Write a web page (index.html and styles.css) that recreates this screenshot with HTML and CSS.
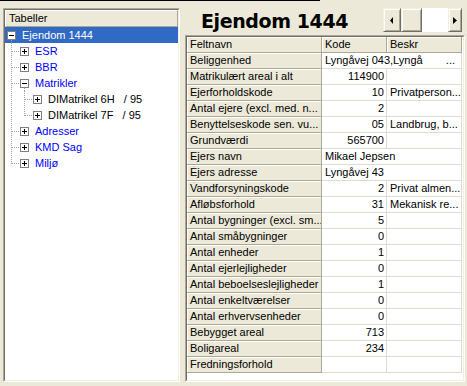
FILE: index.html
```html
<!DOCTYPE html>
<html lang="da">
<head>
  <meta charset="UTF-8" />
  <meta name="viewport" content="width=device-width, initial-scale=1.0">
  <title>Ejendom 1444</title>
  <link rel="stylesheet" href="styles.css">
</head>
<body>
  <div class="window">
    <div class="topline"></div>
    <div class="main">

      <div class="tree-panel">
        <div class="tree-inner">
          <div class="tree-header">Tabeller</div>

          <div class="trow selected">
            <span class="tw node down"><svg width="9" height="9"><rect x="0.5" y="0.5" width="8" height="8" fill="#fff" stroke="#808080"/><path d="M2 4.5h5" stroke="#000"/></svg></span>
            <span class="label root">Ejendom 1444</span>
          </div>
          <div class="trow">
            <span class="tw tee"></span>
            <span class="tw node stub"><svg width="9" height="9"><rect x="0.5" y="0.5" width="8" height="8" fill="#fff" stroke="#808080"/><path d="M2 4.5h5M4.5 2v5" stroke="#000"/></svg></span>
            <span class="label blue">ESR</span>
          </div>
          <div class="trow">
            <span class="tw tee"></span>
            <span class="tw node stub"><svg width="9" height="9"><rect x="0.5" y="0.5" width="8" height="8" fill="#fff" stroke="#808080"/><path d="M2 4.5h5M4.5 2v5" stroke="#000"/></svg></span>
            <span class="label blue">BBR</span>
          </div>
          <div class="trow">
            <span class="tw tee"></span>
            <span class="tw node stub down"><svg width="9" height="9"><rect x="0.5" y="0.5" width="8" height="8" fill="#fff" stroke="#808080"/><path d="M2 4.5h5" stroke="#000"/></svg></span>
            <span class="label blue">Matrikler</span>
          </div>
          <div class="trow">
            <span class="tw pipe"></span>
            <span class="tw tee"></span>
            <span class="tw node stub"><svg width="9" height="9"><rect x="0.5" y="0.5" width="8" height="8" fill="#fff" stroke="#808080"/><path d="M2 4.5h5M4.5 2v5" stroke="#000"/></svg></span>
            <span class="label">DIMatrikel 6H   / 95</span>
          </div>
          <div class="trow">
            <span class="tw pipe"></span>
            <span class="tw ell"></span>
            <span class="tw node stub"><svg width="9" height="9"><rect x="0.5" y="0.5" width="8" height="8" fill="#fff" stroke="#808080"/><path d="M2 4.5h5M4.5 2v5" stroke="#000"/></svg></span>
            <span class="label">DIMatrikel 7F   / 95</span>
          </div>
          <div class="trow">
            <span class="tw tee"></span>
            <span class="tw node stub"><svg width="9" height="9"><rect x="0.5" y="0.5" width="8" height="8" fill="#fff" stroke="#808080"/><path d="M2 4.5h5M4.5 2v5" stroke="#000"/></svg></span>
            <span class="label blue">Adresser</span>
          </div>
          <div class="trow">
            <span class="tw tee"></span>
            <span class="tw node stub"><svg width="9" height="9"><rect x="0.5" y="0.5" width="8" height="8" fill="#fff" stroke="#808080"/><path d="M2 4.5h5M4.5 2v5" stroke="#000"/></svg></span>
            <span class="label blue">KMD Sag</span>
          </div>
          <div class="trow">
            <span class="tw ell"></span>
            <span class="tw node stub"><svg width="9" height="9"><rect x="0.5" y="0.5" width="8" height="8" fill="#fff" stroke="#808080"/><path d="M2 4.5h5M4.5 2v5" stroke="#000"/></svg></span>
            <span class="label blue">Miljø</span>
          </div>
        </div>
      </div>

      <div class="right">
        <div class="titlebar">
          <h1>Ejendom 1444</h1>
          <div class="hscroll">
            <div class="sbtn left"><svg width="4" height="7"><path d="M3 0v7L0 3.5z" fill="#000"/></svg></div>
            <div class="thumb"></div>
            <div class="track"></div>
            <div class="sbtn right"><svg width="4" height="7"><path d="M0 0v7l4-3.5z" fill="#000"/></svg></div>
          </div>
        </div>

        <div class="grid-outer">
          <div class="grid-inner">
            <div class="grid">
              <div class="fx">Feltnavn</div><div class="fx">Kode</div><div class="fx">Beskr</div>

              <div class="fx">Beliggenhed</div><div class="c span2 split"><span>Lyngåvej 043,Lyngå</span><span>...</span></div>
              <div class="fx">Matrikulært areal i alt</div><div class="c num">114900</div><div class="c"></div>
              <div class="fx">Ejerforholdskode</div><div class="c num">10</div><div class="c">Privatperson...</div>
              <div class="fx">Antal ejere (excl. med. n...</div><div class="c num">2</div><div class="c"></div>
              <div class="fx">Benyttelseskode sen. vu...</div><div class="c num">05</div><div class="c">Landbrug, b...</div>
              <div class="fx">Grundværdi</div><div class="c num">565700</div><div class="c"></div>
              <div class="fx">Ejers navn</div><div class="c span2">Mikael Jepsen</div>
              <div class="fx">Ejers adresse</div><div class="c span2">Lyngåvej 43</div>
              <div class="fx">Vandforsyningskode</div><div class="c num">2</div><div class="c">Privat almen...</div>
              <div class="fx">Afløbsforhold</div><div class="c num">31</div><div class="c">Mekanisk re...</div>
              <div class="fx">Antal bygninger (excl. sm...</div><div class="c num">5</div><div class="c"></div>
              <div class="fx">Antal småbygninger</div><div class="c num">0</div><div class="c"></div>
              <div class="fx">Antal enheder</div><div class="c num">1</div><div class="c"></div>
              <div class="fx">Antal ejerlejligheder</div><div class="c num">0</div><div class="c"></div>
              <div class="fx">Antal beboelseslejligheder</div><div class="c num">1</div><div class="c"></div>
              <div class="fx">Antal enkeltværelser</div><div class="c num">0</div><div class="c"></div>
              <div class="fx">Antal erhvervsenheder</div><div class="c num">0</div><div class="c"></div>
              <div class="fx">Bebygget areal</div><div class="c num">713</div><div class="c"></div>
              <div class="fx">Boligareal</div><div class="c num">234</div><div class="c"></div>
              <div class="fx">Fredningsforhold</div><div class="c"></div><div class="c"></div>
            </div>
          </div>
        </div>
      </div>

    </div>
  </div>
</body>
</html>
```

FILE: styles.css
```css
* {
  box-sizing: border-box;
}

body {
  margin: 0;
  background-color: #ece9d8;
  color: #000;
  font-family: "Liberation Sans", Arial, sans-serif;
  font-size: 11px;
}

.window {
  width: 467px;
  height: 386px;
  overflow: hidden;
}

.topline {
  width: 320px;
  height: 1px;
  background: #000;
}

.main {
  display: flex;
  gap: 5px;
  padding: 7px 2px 0 3px;
}

/* tree */

.tree-panel {
  width: 177px;
  height: 374px;
  border: 1px solid;
  border-color: #aca899 #fff #fff #aca899;
}

.tree-inner {
  height: 100%;
  background: #fff;
  border: 1px solid;
  border-color: #716f64 #f1efe2 #f1efe2 #716f64;
}

.tree-header {
  height: 17px;
  line-height: 15px;
  padding-left: 3px;
  background: #ece9d8;
  border: 1px solid;
  border-color: #fff #aca899 #aca899 #fff;
}

.trow {
  display: flex;
  height: 16px;
  line-height: 16px;
  white-space: pre;
}

.trow.selected {
  background: #316ac5;
  color: #fff;
}

.tw {
  flex: none;
  width: 13px;
  height: 16px;
  background-repeat: no-repeat;
}

.tw.pipe {
  background-image: repeating-linear-gradient(to bottom, #a0a0a0 0 1px, transparent 1px 2px);
  background-position: 6px 0;
  background-size: 1px 16px;
}

.tw.tee {
  background-image:
    repeating-linear-gradient(to bottom, #a0a0a0 0 1px, transparent 1px 2px),
    repeating-linear-gradient(to right, #a0a0a0 0 1px, transparent 1px 2px);
  background-position: 6px 0, 7px 8px;
  background-size: 1px 16px, 6px 1px;
}

.tw.ell {
  background-image:
    repeating-linear-gradient(to bottom, #a0a0a0 0 1px, transparent 1px 2px),
    repeating-linear-gradient(to right, #a0a0a0 0 1px, transparent 1px 2px);
  background-position: 6px 0, 7px 8px;
  background-size: 1px 9px, 6px 1px;
}

.tw.node svg {
  display: block;
  margin: 4px 0 0 2px;
}

.tw.node.stub {
  background-image: repeating-linear-gradient(to right, #a0a0a0 0 1px, transparent 1px 2px);
  background-position: 0 8px;
  background-size: 2px 1px;
}

.tw.node.down {
  background-image: repeating-linear-gradient(to bottom, #a0a0a0 0 1px, transparent 1px 2px);
  background-position: 6px 13px;
  background-size: 1px 3px;
}

.tw.node.stub.down {
  background-image:
    repeating-linear-gradient(to right, #a0a0a0 0 1px, transparent 1px 2px),
    repeating-linear-gradient(to bottom, #a0a0a0 0 1px, transparent 1px 2px);
  background-position: 0 8px, 6px 13px;
  background-size: 2px 1px, 1px 3px;
}

.label {
  padding-left: 4px;
}

.label.root {
  padding-left: 4px;
}

.blue {
  color: #0000ff;
}

/* right side */

.right {
  width: 280px;
  display: flex;
  flex-direction: column;
}

.titlebar {
  display: flex;
  height: 27px;
}

.titlebar h1 {
  margin: 0 0 0 16px;
  font-family: "DejaVu Sans", Verdana, sans-serif;
  font-size: 19px;
  font-weight: bold;
  line-height: 26px;
  letter-spacing: -0.4px;
}

.hscroll {
  display: flex;
  height: 24px;
  margin-left: auto;
  margin-right: 3px;
}

.sbtn, .thumb {
  display: flex;
  align-items: center;
  justify-content: center;
  background: #ece9d8;
  border: 1px solid;
  border-color: #f1efe2 #716f64 #716f64 #f1efe2;
  box-shadow: inset 1px 1px 0 #fff, inset -1px -1px 0 #aca899;
}

.sbtn.left {
  width: 18px;
}

.sbtn.right {
  width: 14px;
}

.thumb {
  width: 21px;
}

.track {
  width: 26px;
  background: #fff;
}

.grid-outer {
  height: 347px;
  border: 1px solid;
  border-color: #aca899 #fff #fff #aca899;
}

.grid-inner {
  height: 100%;
  background: #fff;
  border: 1px solid;
  border-color: #716f64 #f1efe2 #f1efe2 #716f64;
}

.grid {
  display: grid;
  grid-template-columns: 135px 65px 75px;
  grid-auto-rows: 16px;
}

.fx, .c {
  line-height: 15px;
  white-space: nowrap;
  overflow: hidden;
  padding: 0 2px 0 3px;
}

.fx {
  background: #ece9d8;
  border-right: 1px solid #aca899;
  border-bottom: 1px solid #aca899;
  box-shadow: inset 1px 1px 0 #fff;
}

.c {
  border-right: 1px solid #dedbd0;
  border-bottom: 1px solid #dedbd0;
}

.num {
  text-align: right;
}

.span2 {
  grid-column: span 2;
}

.split {
  display: flex;
  justify-content: space-between;
  padding-right: 6px;
}
```
